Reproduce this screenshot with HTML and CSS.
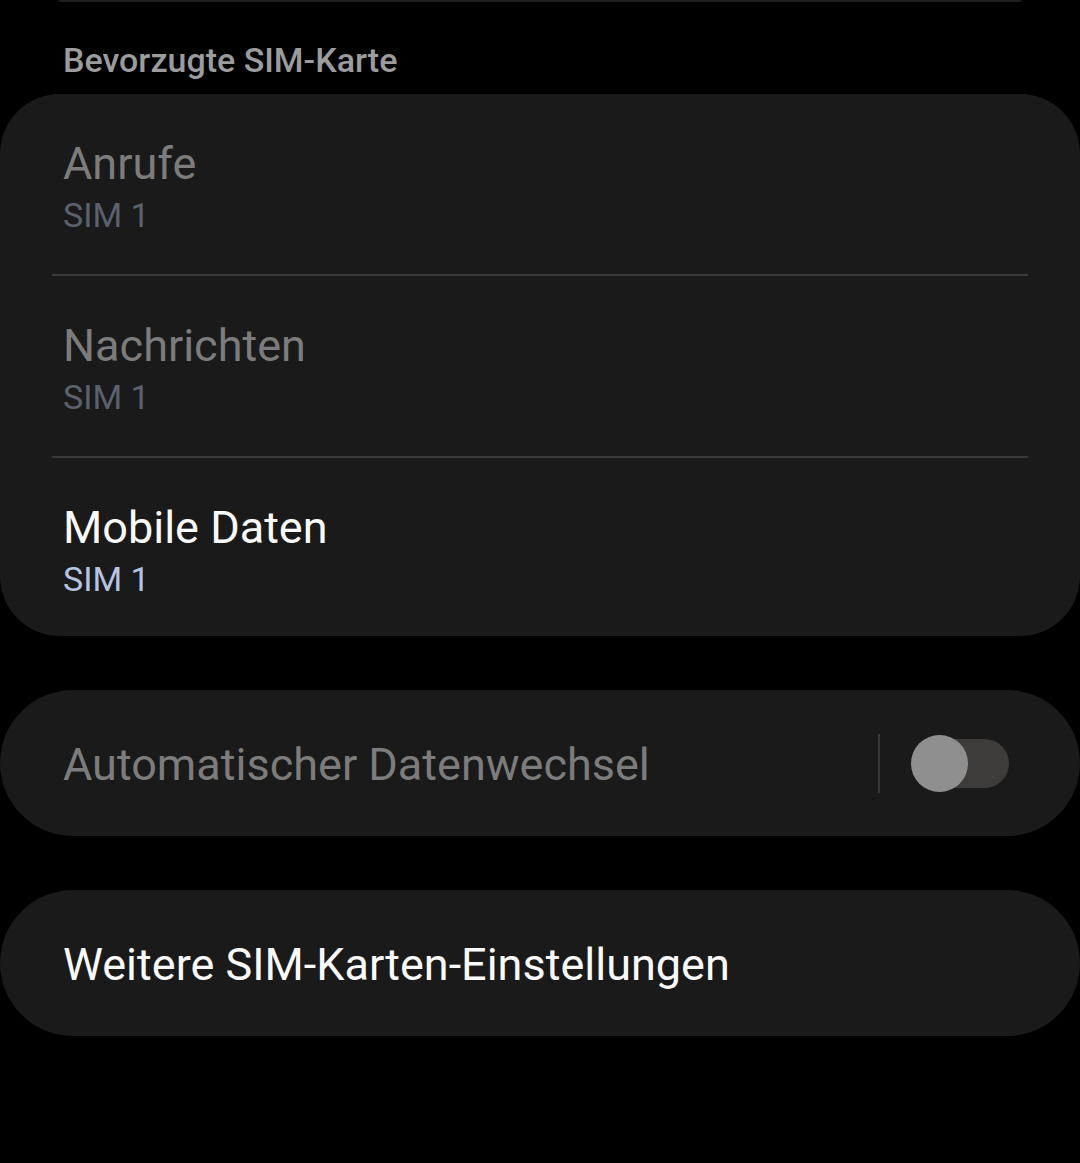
FILE: index.html
```html
<!DOCTYPE html>
<html lang="de">
  <head>
    <meta charset="UTF-8" />
    <title>SIM-Karten-Verwaltung</title>
    <link rel="stylesheet" href="styles.css">
  </head>
  <body>
    <div class="top-edge"></div>

    <h2 class="section-title">Bevorzugte SIM-Karte</h2>

    <section class="card">
      <div class="row disabled">
        <div class="row-title">Anrufe</div>
        <div class="row-sub">SIM 1</div>
      </div>
      <div class="divider"></div>
      <div class="row disabled">
        <div class="row-title">Nachrichten</div>
        <div class="row-sub">SIM 1</div>
      </div>
      <div class="divider"></div>
      <div class="row last">
        <div class="row-title">Mobile Daten</div>
        <div class="row-sub">SIM 1</div>
      </div>
    </section>

    <section class="card pill switch-row disabled">
      <div class="row-title">Automatischer Datenwechsel</div>
      <div class="switch-area">
        <span class="switch-sep"></span>
        <span class="switch">
          <span class="switch-track"></span>
          <span class="switch-thumb"></span>
        </span>
      </div>
    </section>

    <section class="card pill">
      <div class="row-title">Weitere SIM-Karten-Einstellungen</div>
    </section>
  </body>
</html>
```

FILE: styles.css
```css
body {
  margin: 0;
  padding: 0;
  background-color: #000;
  font-family: Roboto, "Liberation Sans", sans-serif;
  color: #fafafa;
  height: 1163px;
  overflow: hidden;
}

.top-edge {
  height: 2px;
  margin: 0 58px;
  background: #1f1f1f;
  border-radius: 0 0 2px 2px;
}

.section-title {
  margin: 0;
  padding: 38px 63px 14px;
  font-size: 34px;
  line-height: 40px;
  font-weight: 500;
  color: #9c9c9c;
}

.card {
  background-color: #1a1a1a;
  border-radius: 60px;
  margin-bottom: 54px;
}

.row {
  padding: 43px 63px 39px;
}

.row.last {
  padding-bottom: 37px;
}

.row-title {
  font-size: 45px;
  line-height: 54px;
  color: #fafafa;
}

.row-sub {
  margin-top: 4px;
  font-size: 34px;
  line-height: 40px;
  color: #b5c4e3;
}

.row.disabled .row-title,
.switch-row.disabled .row-title {
  color: #7c7c7c;
}

.row.disabled .row-sub {
  color: #5b616d;
}

.divider {
  height: 2px;
  margin: 0 52px;
  background: #3a3a3a;
}

.pill {
  height: 146px;
  border-radius: 73px;
  display: flex;
  align-items: center;
  padding: 0 63px;
}

.pill > .row-title {
  padding-top: 4px;
}

.switch-row {
  justify-content: space-between;
  padding-right: 71px;
}

.switch-area {
  display: flex;
  align-items: center;
  gap: 31px;
}

.switch-sep {
  width: 2px;
  height: 59px;
  background: #383838;
}

.switch {
  position: relative;
  width: 98px;
  height: 57px;
}

.switch-track {
  position: absolute;
  left: 4px;
  right: 0;
  top: 4px;
  bottom: 4px;
  border-radius: 25px;
  background: #3d3c3a;
}

.switch-thumb {
  position: absolute;
  left: 0;
  top: 0;
  width: 57px;
  height: 57px;
  border-radius: 50%;
  background: #8f8f8f;
}
```
